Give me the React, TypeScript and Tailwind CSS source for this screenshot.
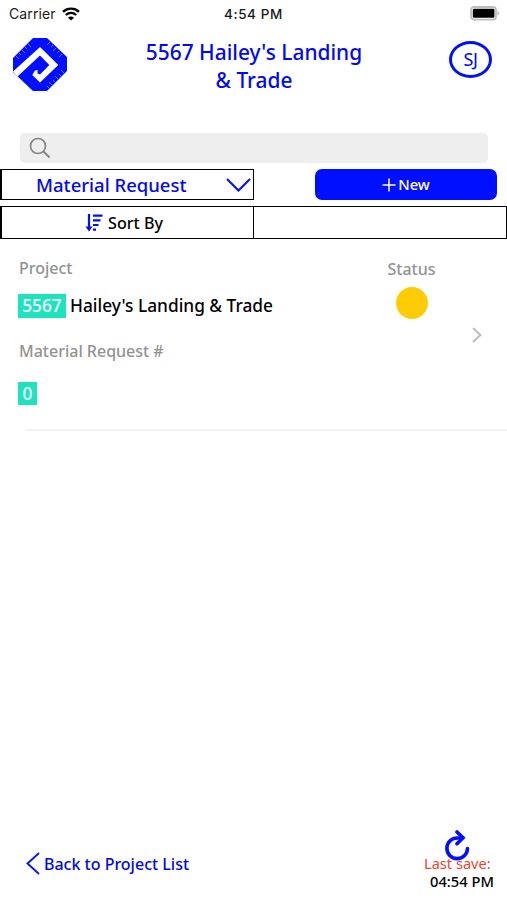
import { useState } from "react";

const StatusBar = () => {
  return (
    <div className="grid h-[27px] shrink-0 grid-cols-3 items-center pl-[9px] pr-[7px] font-['Inter','Liberation_Sans',sans-serif] text-[13px] text-[#1a1a1a]">
      <div className="flex items-center gap-[6px]">
        <span className="text-[14px] tracking-[0.1px]">Carrier</span>
        <svg width="18" height="14" viewBox="0 0 18 14" fill="none" stroke="#000">
          <path d="M1 4.8C5.4.6 12.6.6 17 4.8" strokeWidth="2.4" />
          <path d="M3.8 8C6.8 5.2 11.2 5.2 14.2 8" strokeWidth="2.3" />
          <path d="M9 13.6 6 10.7C7.7 9.2 10.3 9.2 12 10.7Z" fill="#000" stroke="none" />
        </svg>
      </div>
      <span className="-ml-[2px] mt-px whitespace-nowrap text-center text-[13.5px] font-medium tracking-[0.6px]">4:54 PM</span>
      <svg className="justify-self-end" width="30" height="15" viewBox="0 0 30 15">
        <rect x="1" y="1" width="25" height="12.6" rx="3" fill="#fff" stroke="#bdbdbd" strokeWidth="1.8" />
        <rect x="2.8" y="2.8" width="21.6" height="9" rx="1.2" fill="#000" />
        <path d="M27.6 5v4.6q2.8-2.3 0-4.6" fill="#aaa" />
      </svg>
    </div>
  );
};

const Logo = () => {
  return (
    <svg width="54" height="53" viewBox="0 0 54 53">
      <path d="M20 0H34L54 19V33L34 53H20L0 34V20Z" fill="#000fff" />
      <path
        d="M0 33.500 27 9 45.300 27 27 44.500 19.300 37 22 32.500 24.500 32 24.500 35.500 27 36.500 36.300 27 27 17.500 4.500 38.500Z"
        fill="#fff"
      />
      {/* ruler ticks along the slanted edges */}
      <path
        d="m3 18 3 3m0-6 2 2m1-5 3 3m0-6 2 2m1-5 3 3M37 4l-3 3m6 0-2 2M43 10l-3 3m6 0-2 2M49 16l-3 3M51 35l-3-3m0 6-2-2M45 41l-3-3m0 6-2-2M39 47l-3-3m0 6-2-2"
        stroke="#a5a9ff"
        strokeWidth=".7"
      />
    </svg>
  );
};

const Header = () => {
  return (
    <header className="flex h-[106px] shrink-0 items-start justify-between pl-[13px] pr-[15px] pt-[11px]">
      <Logo />
      <h1 className="mr-[8px] w-[240px] text-center text-[20.9px] font-medium leading-[28px] text-[#0008f5]">
        5567 Hailey's Landing
        <br />& Trade
      </h1>
      <div className="mt-[3px] flex h-[37px] w-[43px] items-center justify-center rounded-[50%] border-[3px] border-[#000fff] text-[18px] tracking-[-0.3px] text-[#0008f5]">
        SJ
      </div>
    </header>
  );
};

const Toolbar = () => {
  return (
    <>
      <div className="mt-[6px] flex h-[31px] shrink-0 items-stretch justify-between pr-[10px]">
        <button className="flex w-[254px] items-center justify-between border border-l-2 border-black pl-[34px] pr-[2px] text-[18.5px] font-medium text-[#0008f5]">
          <span>Material Request</span>
          <svg width="25" height="14" viewBox="0 0 25 14" fill="none" stroke="#000fff" strokeWidth="2">
            <path d="m1 1 11.5 11.5L24 1" />
          </svg>
        </button>
        <button className="flex w-[182px] items-center justify-center gap-[2px] rounded-[7px] bg-[#000fff] text-[14.8px] font-medium text-white">
          <svg width="14" height="14" viewBox="0 0 14 14" stroke="#fff" strokeWidth="1.5">
            <path d="M7 .5v13M.5 7h13" />
          </svg>
          New
        </button>
      </div>
      <div className="mt-[6px] flex h-[33px] shrink-0 border border-l-2 border-black">
        <button className="flex w-[252px] items-center justify-center gap-[5px] border-r border-black pr-[7px] text-[16.1px] font-medium text-black">
          <svg width="18" height="18" viewBox="0 0 18 18" fill="none" stroke="#000fff" strokeWidth="2.2">
            <path d="M4 0v14" />
            <path d="M.5 12.5 4 17.5l3.5-5Z" fill="#000fff" stroke="none" />
            <path d="M8 1.6h9.5M8 6.3h7.5M8 11h5.5M8 15.7h3" />
          </svg>
          <span className="mt-px">Sort By</span>
        </button>
        <div className="flex-1" />
      </div>
    </>
  );
};

const RequestCard = () => {
  return (
    <section className="flex h-[190px] shrink-0 text-[16px] font-medium">
      <div className="flex w-[360px] flex-col items-start pl-[18px] pt-[18px]">
        <span className="pl-px leading-[22px] text-[#929292]">Project</span>
        <div className="mt-[15px] flex items-center gap-[4px] text-[17.3px] leading-[24px]">
          <span className="w-[48px] bg-[#1de4bd] text-center text-white">5567</span>
          <span className="text-black">Hailey's Landing & Trade</span>
        </div>
        <span className="mt-[22px] pl-px leading-[22px] text-[#929292]">Material Request #</span>
        <span className="mt-[20px] w-[19px] bg-[#1de4bd] text-center text-[17.3px] leading-[23px] text-white">0</span>
      </div>
      <div className="flex w-[103px] flex-col items-center pt-[19px]">
        <span className="leading-[22px] text-[#929292]">Status</span>
        <div className="mt-[7px] h-[32px] w-[32px] rounded-full bg-[#ffcb05]" />
      </div>
      <svg className="ml-[9px] mt-[88px]" width="10" height="16" viewBox="0 0 10 16" fill="none" stroke="#bababa" strokeWidth="1.8">
        <path d="m1 1 7.5 7L1 15" />
      </svg>
    </section>
  );
};

const Footer = () => {
  return (
    <footer className="mt-auto flex h-[70px] shrink-0 items-start justify-between pl-[26px] pr-[6px] font-medium">
      <button className="mt-[22px] flex items-center gap-[4px] text-[16px] leading-[22px] text-[#0008e8]">
        <svg width="14" height="23" viewBox="0 0 14 23" fill="none" stroke="#000fff" strokeWidth="1.8">
          <path d="M13 1 1.5 11.5 13 22" />
        </svg>
        Back to Project List
      </button>
      <div className="flex w-[73px] flex-col">
        <svg className="ml-[15px]" width="28" height="31" viewBox="0 0 28 31" fill="none" stroke="#000fff" strokeWidth="3.6">
          <path d="M24.5 18.5A10.3 10.3 0 1 1 14.500 8H19" strokeLinecap="round" />
          <path d="m14 2 6 5.700-6 6" strokeLinecap="round" />
        </svg>
        <span className="-ml-[4px] mt-[-8px] whitespace-nowrap text-[14.6px] font-normal leading-[20px] text-[#f04328]">
          Last save:
        </span>
        <span className="ml-[2px] mt-[-1px] whitespace-nowrap text-[14.7px] leading-[18px] text-black">04:54 PM</span>
      </div>
    </footer>
  );
};

const App = () => {
  const [search, setSearch] = useState("");

  return (
    <main className="flex h-[900px] w-[507px] flex-col overflow-hidden bg-white font-['Noto_Sans','Open_Sans',sans-serif]">
      <StatusBar />
      <Header />
      <label className="ml-[20px] mr-[19px] flex h-[30px] shrink-0 items-center rounded-[5px] bg-[#eeeeee] pl-[9px]">
        <svg width="22" height="22" viewBox="0 0 22 22" fill="none" stroke="#858585" strokeWidth="1.7">
          <circle cx="9" cy="9" r="7.5" />
          <path d="m14.5 14.5 6 6" strokeWidth="2" />
        </svg>
        <input
          className="h-full flex-1 bg-transparent px-2 focus:outline-0"
          value={search}
          onChange={(e) => setSearch(e.target.value)}
        />
      </label>
      <Toolbar />
      <RequestCard />
      <div className="ml-[25px] h-[2px] shrink-0 bg-[#f3f3f3]" />
      <Footer />
    </main>
  );
};

export default App;
